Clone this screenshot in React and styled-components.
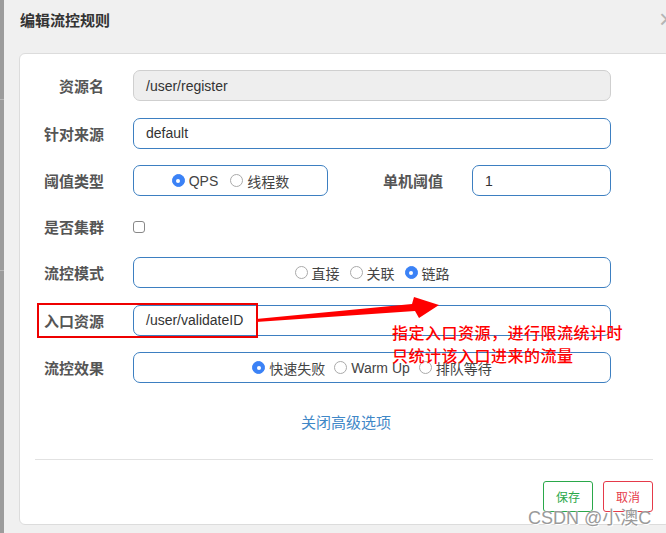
import React from "react";
import styled, { createGlobalStyle } from "styled-components";

const GlobalStyle = createGlobalStyle`
  html, body {
    margin: 0;
    padding: 0;
    background: #f0f0f0;
  }
  * { box-sizing: border-box; }
`;

const FONT = `"Liberation Sans", "Noto Sans CJK SC", sans-serif`;

const Page = styled.div`
  position: relative;
  display: flex;
  width: 666px;
  height: 533px;
  overflow: hidden;
  background: #f0f0f0;
  font-family: ${FONT};
`;

const LeftStrip = styled.div`
  width: 4px;
  flex: none;
  background: linear-gradient(
    #9c9c9c 0, #9c9c9c 99px, #b8b8b8 99px, #b8b8b8 100px,
    #9c9c9c 100px, #9c9c9c 270px, #b8b8b8 270px, #b8b8b8 271px, #9c9c9c 271px
  );
`;

const Modal = styled.div`
  flex: 1;
  display: flex;
  flex-direction: column;
  min-width: 0;
`;

const Header = styled.div`
  position: relative;
  height: 53px;
  padding: 11px 0 0 16px;
  flex: none;
`;

const Title = styled.h4`
  margin: 0;
  font-size: 15px;
  font-weight: 700;
  color: #333;
  line-height: 20px;
`;

const Close = styled.span`
  position: absolute;
  left: 655px;
  top: 6px;
  font-size: 26px;
  line-height: 26px;
  color: #b5b5b5;
  font-family: ${FONT};
`;

const Card = styled.div`
  margin-left: 15px;
  width: 652px;
  height: 472px;
  background: #fff;
  border: 1px solid #dcdcdc;
  border-radius: 6px;
  padding-top: 16px;
  display: flex;
  flex-direction: column;
`;

const Form = styled.div`
  display: flex;
  flex-direction: column;
  gap: 16.5px;
`;

const Row = styled.div`
  display: flex;
  align-items: center;
  height: ${(p) => p.h || 31}px;
`;

const Label = styled.div`
  width: ${(p) => p.w || 84}px;
  flex: none;
  text-align: right;
  font-size: 15px;
  font-weight: 600;
  color: #555;
  margin-right: ${(p) => (p.gap != null ? p.gap : 29)}px;
`;

const Input = styled.div`
  width: ${(p) => p.w}px;
  height: 31px;
  flex: none;
  display: flex;
  align-items: center;
  padding-left: 12px;
  font-size: 14px;
  color: #333;
  border-radius: 7px;
  border: 1px solid ${(p) => (p.disabled ? "#cfcfcf" : "#3d7fc1")};
  background: ${(p) => (p.disabled ? "#eeeeee" : "#fff")};
`;

const RadioBox = styled.div`
  width: ${(p) => p.w}px;
  height: 31px;
  flex: none;
  display: flex;
  align-items: center;
  justify-content: center;
  border: 1px solid #3d7fc1;
  border-radius: 7px;
  background: #fff;
  gap: ${(p) => p.gap || 10}px;
  font-size: 14px;
  color: #444;
`;

const RadioItem = styled.span`
  display: inline-flex;
  align-items: center;
  gap: 4px;
  white-space: nowrap;
`;

const Dot = styled.span`
  width: 13px;
  height: 13px;
  border-radius: 50%;
  flex: none;
  background: ${(p) => (p.on ? "#3b82f6" : "#fff")};
  border: 1px solid ${(p) => (p.on ? "#3b82f6" : "#aaa")};
  display: inline-flex;
  align-items: center;
  justify-content: center;
  &::after {
    content: "";
    width: 4px;
    height: 4px;
    border-radius: 50%;
    background: ${(p) => (p.on ? "#fff" : "transparent")};
  }
`;

const Checkbox = styled.span`
  width: 12px;
  height: 12px;
  border: 1px solid #888;
  border-radius: 3px;
  background: #fff;
`;

const LinkRow = styled.div`
  margin-top: 30px;
  padding-left: 2px;
  text-align: center;
  font-size: 15px;
  color: #3f87c7;
  line-height: 20px;
  width: 650px;
`;

const Divider = styled.hr`
  margin: 26px 0 0 15px;
  width: 618px;
  border: none;
  border-top: 1px solid #e2e2e2;
`;

const Footer = styled.div`
  display: flex;
  justify-content: flex-end;
  gap: 10px;
  width: 633px;
  margin-top: 21px;
`;

const Btn = styled.button`
  width: 50px;
  height: 31px;
  background: #fff;
  border: 1px solid ${(p) => p.color};
  color: ${(p) => p.color};
  border-radius: 3px;
  font-size: 12px;
  font-family: ${FONT};
  padding: 0;
`;

const Highlight = styled.div`
  position: absolute;
  left: 37px;
  top: 303px;
  width: 221px;
  height: 35px;
  border: 2px solid #ee0000;
`;

const Arrow = styled.svg`
  position: absolute;
  left: 0;
  top: 0;
  pointer-events: none;
`;

const Note = styled.div`
  position: absolute;
  left: 392px;
  top: 321px;
  font-size: 16px;
  line-height: 23px;
  color: #ff0000;
  font-weight: 500;
  letter-spacing: 0.5px;
  font-family: "Noto Sans CJK SC", sans-serif;
`;

const Watermark = styled.div`
  position: absolute;
  left: 528px;
  top: 503px;
  font-size: 18px;
  color: #9a9a9a;
  font-family: ${FONT};
  text-shadow: 0 0 1px #fff, 1px 1px 0 #fff;
`;

const Radio = ({ on, children }) => (
  <RadioItem>
    <Dot on={on ? 1 : 0} />
    {children}
  </RadioItem>
);

const App = () => {
  return (
    <Page>
      <GlobalStyle />
      <LeftStrip />
      <Modal>
        <Header>
          <Title>编辑流控规则</Title>
          <Close>×</Close>
        </Header>
        <Card>
          <Form>
            <Row>
              <Label>资源名</Label>
              <Input w={478} disabled>/user/register</Input>
            </Row>
            <Row>
              <Label>针对来源</Label>
              <Input w={478}>default</Input>
            </Row>
            <Row>
              <Label>阈值类型</Label>
              <RadioBox w={195} gap={12}>
                <Radio on>QPS</Radio>
                <Radio>线程数</Radio>
              </RadioBox>
              <Label w={115}>单机阈值</Label>
              <Input w={139}>1</Input>
            </Row>
            <Row h={28}>
              <Label>是否集群</Label>
              <Checkbox />
            </Row>
            <Row>
              <Label>流控模式</Label>
              <RadioBox w={478}>
                <Radio>直接</Radio>
                <Radio>关联</Radio>
                <Radio on>链路</Radio>
              </RadioBox>
            </Row>
            <Row>
              <Label>入口资源</Label>
              <Input w={478}>/user/validateID</Input>
            </Row>
            <Row>
              <Label>流控效果</Label>
              <RadioBox w={478} gap={9}>
                <Radio on>快速失败</Radio>
                <Radio>Warm Up</Radio>
                <Radio>排队等待</Radio>
              </RadioBox>
            </Row>
          </Form>
          <LinkRow>关闭高级选项</LinkRow>
          <Divider />
          <Footer>
            <Btn color="#2aa84a">保存</Btn>
            <Btn color="#e53a4a">取消</Btn>
          </Footer>
        </Card>
      </Modal>
      <Highlight />
      <Arrow width="666" height="533" viewBox="0 0 666 533">
        <polygon
          points="256,319 412,304 414,297 439,305 419,318 415,311 256,322"
          fill="#ff0000"
        />
      </Arrow>
      <Note>
        指定入口资源，进行限流统计时
        <br />
        只统计该入口进来的流量
      </Note>
      <Watermark>CSDN @小澳C</Watermark>
    </Page>
  );
};

export default App;
